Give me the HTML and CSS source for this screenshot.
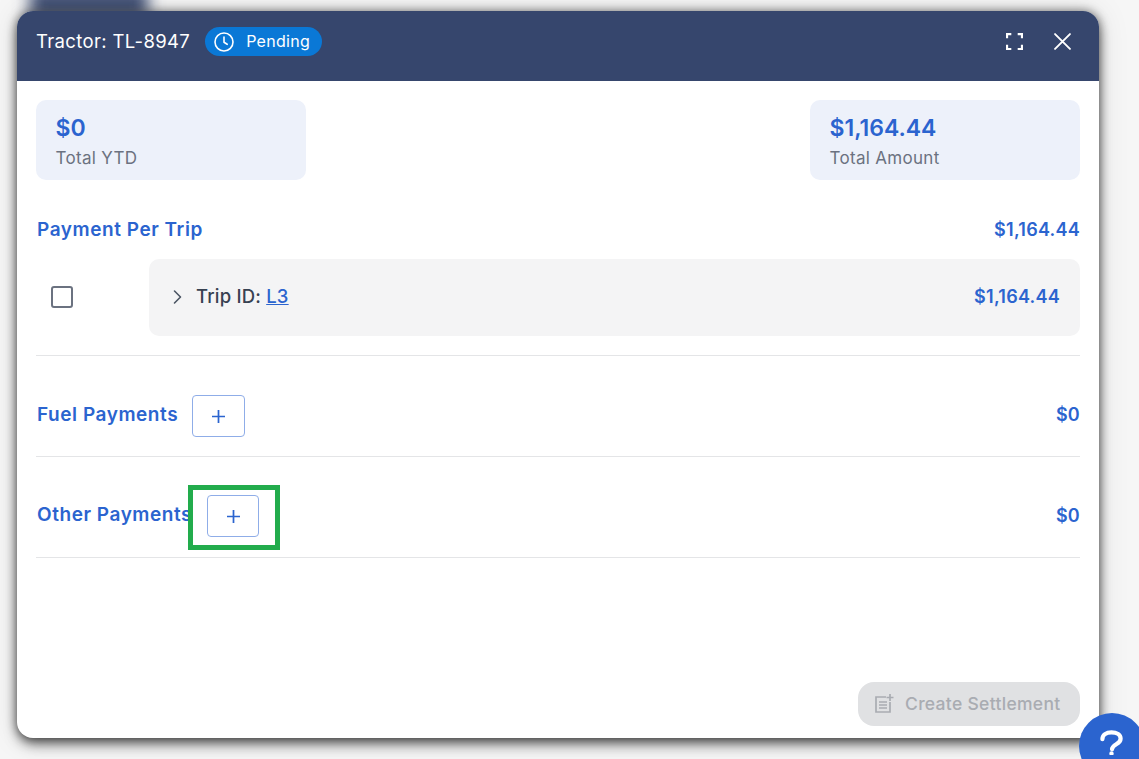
FILE: index.html
```html
<!DOCTYPE html>
<html lang="en">
<head>
<meta charset="utf-8">
<title>Tractor TL-8947</title>
<link rel="stylesheet" href="styles.css">
</head>
<body>
<div class="backdrop-blob"></div>
<main class="modal">
  <header class="modal-head">
    <h1 class="modal-title">Tractor: TL-8947</h1>
    <span class="badge">
      <svg class="badge-icon" viewBox="0 0 20 20" fill="none" stroke="currentColor" stroke-width="1.6" stroke-linecap="round" stroke-linejoin="round"><circle cx="10" cy="10" r="9"/><path d="M10 5v5.3l3.2 2"/></svg>
      <span class="badge-text">Pending</span>
    </span>
    <div class="head-actions">
      <svg class="head-icon" viewBox="0 0 16 16" fill="none" stroke="currentColor" stroke-width="2"><path d="M1 5V1h4M11 1h4v4M15 11v4h-4M5 15H1v-4"/></svg>
      <svg class="head-icon" viewBox="0 0 16 16" fill="none" stroke="currentColor" stroke-width="1.8" stroke-linecap="round"><path d="M1 1l14 14M15 1L1 15"/></svg>
    </div>
  </header>
  <div class="modal-body">
    <section class="stats">
      <div class="stat"><div class="stat-value">$0</div><div class="stat-label">Total YTD</div></div>
      <div class="stat"><div class="stat-value">$1,164.44</div><div class="stat-label">Total Amount</div></div>
    </section>
    <section class="trip-section">
      <div class="row-head"><h2 class="sec-title">Payment Per Trip</h2><span class="amount">$1,164.44</span></div>
      <div class="trip-row">
        <div class="check-cell"><span class="checkbox"></span></div>
        <div class="trip-card">
          <svg class="chev" viewBox="0 0 10 16" fill="none" stroke="currentColor" stroke-width="1.6" stroke-linecap="round" stroke-linejoin="round"><path d="M2 2l6 6-6 6"/></svg>
          <span class="trip-label">Trip ID: <a class="trip-link" href="#">L3</a></span>
          <span class="amount trip-amount">$1,164.44</span>
        </div>
      </div>
    </section>
    <section class="pay-row fuel">
      <h2 class="sec-title">Fuel Payments</h2>
      <button class="add-btn" type="button"><svg viewBox="0 0 12 12" fill="none" stroke="currentColor" stroke-width="1.6"><path d="M6 0v12M0 6h12"/></svg></button>
      <span class="amount">$0</span>
    </section>
    <section class="pay-row other">
      <h2 class="sec-title">Other Payments</h2>
      <div class="btn-wrap">
        <button class="add-btn" type="button"><svg viewBox="0 0 12 12" fill="none" stroke="currentColor" stroke-width="1.6"><path d="M6 0v12M0 6h12"/></svg></button>
        <span class="highlight"></span>
      </div>
      <span class="amount">$0</span>
    </section>
    <footer class="modal-foot">
      <button class="create-btn" type="button">
        <svg class="create-icon" viewBox="0 0 20 20" fill="none" stroke="currentColor" stroke-width="1.7"><path d="M12 3H2v15h14V8"/><path d="M5 8h8M5 11h8M5 14h8"/><path d="M16 0v7M12.5 3.5h7"/></svg>
        <span class="create-text">Create Settlement</span>
      </button>
    </footer>
  </div>
</main>
<button class="help" type="button" aria-label="Help">
  <svg class="help-icon" viewBox="0 0 24 26" fill="none" stroke="currentColor" stroke-width="4.4" stroke-linecap="round"><path d="M2.5 9.5C2.5 5 6.500 2.500 12 2.500S21.500 5 21.500 9c0 6-8.500 5.500-9 11"/><circle cx="12" cy="24.500" r="1.300" fill="currentColor" stroke-width="2"/></svg>
</button>
</body>
</html>
```
FILE: styles.css
```css
* { box-sizing: border-box; }
html, body { margin: 0; height: 100%; overflow: hidden; }
body {
  background: #f6f6f6;
  padding: 11px 40px 21px 17px;
  font-family: "Inter", "Open Sans", sans-serif;
  position: relative;
}
.backdrop-blob {
  position: absolute;
  left: 30px; top: -10px;
  width: 118px; height: 26px;
  background: #36466d;
  filter: blur(8px);
}
.modal {
  position: relative;
  height: 727px;
  background: #fff;
  border-radius: 16px;
  box-shadow: 0 7px 14px -2px rgba(0,0,0,.62), 0 0 10px 1px rgba(0,0,0,.4), 0 0 30px 4px rgba(0,0,0,.08);
  display: flex;
  flex-direction: column;
  overflow: hidden;
}
.modal-head {
  height: 70px;
  flex: none;
  background: #36466d;
  color: #fff;
  display: flex;
  align-items: flex-start;
  padding: 16px 28px 0 19px;
}
.modal-title { margin: 0; font-size: 18.5px; font-weight: 400; line-height: 28px; letter-spacing: .35px; white-space: nowrap; }
.badge {
  margin-left: 15px;
  height: 29px;
  width: 117px;
  background: #0a78d6;
  border-radius: 15px;
  display: flex;
  align-items: center;
  gap: 12px;
  padding-left: 9px;
  font-size: 16px;
  letter-spacing: .3px;
}
.badge-text { margin-bottom: 2px; }
.badge-icon { width: 20px; height: 20px; flex: none; }
.head-actions { margin-left: auto; display: flex; gap: 31px; padding-top: 6px; }
.head-icon { width: 17px; height: 17px; display: block; }
.modal-body {
  flex: 1;
  display: flex;
  flex-direction: column;
  padding: 19px 19px 12px 19px;
  min-height: 0;
}
.stats { display: flex; justify-content: space-between; }
.stat {
  width: 270px; height: 80px;
  background: #edf1fa;
  border-radius: 10px;
  padding: 12px 20px 0 19.5px;
}
.stat-value { font-size: 23px; line-height: 32px; font-weight: 600; color: #2b64cf; }
.stat-label { font-size: 17px; line-height: 24px; margin-top: 2px; letter-spacing: .3px; color: #6b7280; }
.row-head { display: flex; justify-content: space-between; align-items: center; margin-top: 34px; height: 30px; }
.sec-title { margin: 1px 0 0 1px; font-size: 19px; letter-spacing: .55px; font-weight: 600; color: #2b64cf; line-height: 30px; white-space: nowrap; }
.other .sec-title { margin-top: 0; }
.amount { font-size: 18px; letter-spacing: .25px; font-weight: 600; color: #2b64cf; }
.trip-section { border-bottom: 1px solid #e4e5e7; padding-bottom: 19px; }
.trip-row { display: flex; margin-top: 15px; }
.check-cell { width: 113px; display: flex; align-items: center; padding: 0 0 2px 15px; }
.checkbox { width: 22px; height: 22px; border: 2.5px solid #6b7280; border-radius: 3px; display: block; }
.trip-card {
  flex: 1;
  height: 77px;
  background: #f4f4f5;
  border-radius: 10px;
  display: flex;
  align-items: center;
  padding: 0 20px 2px 23px;
}
.chev { width: 11px; height: 16px; color: #4b5563; }
.trip-label { margin: 0 0 2px 13px; font-size: 18.5px; letter-spacing: .2px; font-weight: 500; color: #374151; }
.trip-link { color: #2b64cf; }
.trip-amount { margin-left: auto; }
.pay-row { display: flex; align-items: center; border-bottom: 1px solid #e4e5e7; height: 101px; }
.pay-row .amount { margin-left: auto; }
.fuel { padding-top: 16px; }
.fuel .add-btn { margin: 4px 0 0 14px; }
.other { padding-top: 15px; }
.other .amount { margin-top: 2px; }
.btn-wrap { position: relative; margin: 3px 0 0 15px; }
.add-btn {
  width: 53px; height: 42px;
  background: #fff;
  border: 1px solid #8fade8;
  border-radius: 4px;
  color: #2b64cf;
  display: flex;
  align-items: center;
  justify-content: center;
  padding: 0;
}
.btn-wrap .add-btn { width: 52px; }
.add-btn svg { width: 13px; height: 13px; }
.highlight {
  position: absolute;
  left: -19px; top: -10px;
  width: 92px; height: 65px;
  border: 5px solid #22ac4c;
}
.modal-foot { margin-top: auto; display: flex; justify-content: flex-end; }
.create-btn {
  width: 222px; height: 44px;
  border: 0;
  border-radius: 16px;
  background: #e0e1e3;
  color: #a9acb2;
  display: flex;
  align-items: center;
  gap: 11px;
  padding: 0 0 0 16px;
  font: 500 17.5px "Inter", "Open Sans", sans-serif;
  letter-spacing: .3px;
}
.create-text { margin-bottom: 2px; }
.create-icon { width: 20px; height: 20px; flex: none; }
.help {
  position: absolute;
  left: 1079px; top: 713px;
  width: 66px; height: 66px;
  border: 0;
  border-radius: 50%;
  background: #2b64cf;
  color: #fff;
  padding: 0;
}
.help-icon { position: absolute; left: 21px; top: 17px; width: 23px; height: 25px; }
```
